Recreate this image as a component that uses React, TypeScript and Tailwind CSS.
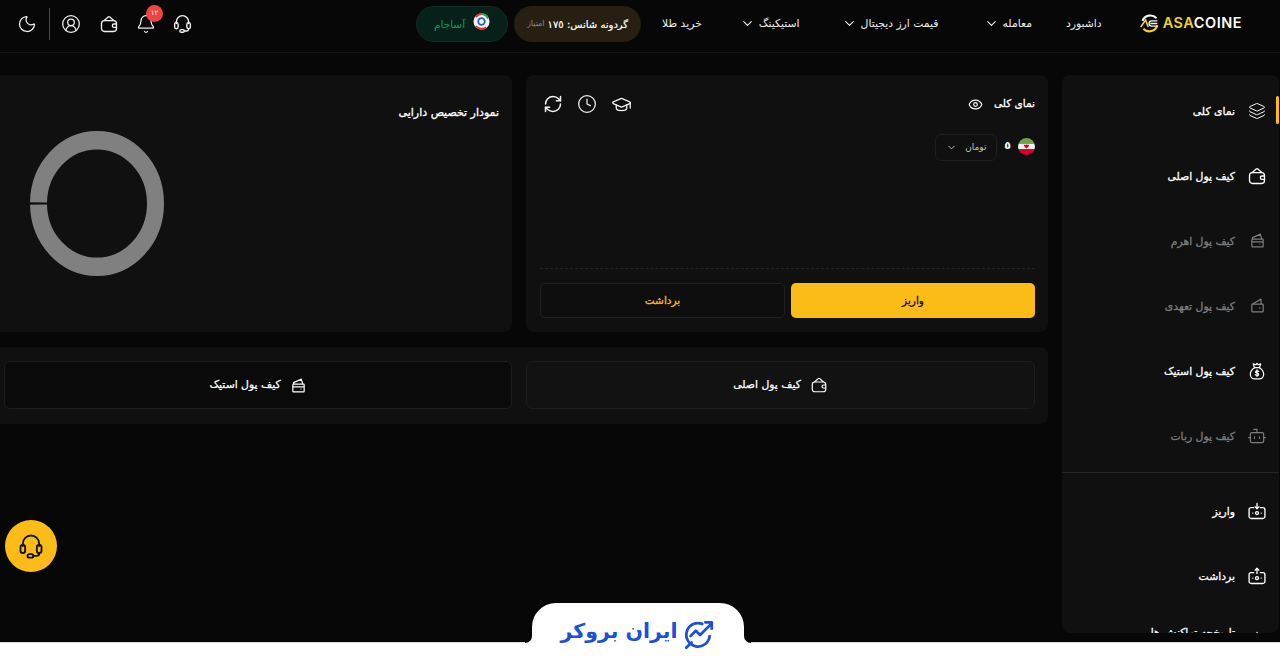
import { Bell, Bot, ChevronDown, CircleUserRound, Clock, Eye, GraduationCap, Layers, Moon, RefreshCw } from 'lucide-react'
import type { ReactNode } from 'react'

type IconProps = { className?: string }

function HeadsetIcon({ className = 'size-5' }: IconProps) {
  return (
    <svg viewBox="0 0 24 24" fill="none" stroke="currentColor" strokeWidth="1.6" strokeLinecap="round" strokeLinejoin="round" className={className}>
      <path d="M5 12v-2a7 7 0 0 1 14 0v2" />
      <rect x="3" y="11" width="4" height="7" rx="2" />
      <rect x="17" y="11" width="4" height="7" rx="2" />
      <path d="M19 18v.5a2 2 0 0 1-2 2h-3" />
      <rect x="9" y="19" width="5" height="3" rx="1.5" />
    </svg>
  )
}

function WalletIcon({ className = 'size-5' }: IconProps) {
  return (
    <svg viewBox="0 0 24 24" fill="none" stroke="currentColor" strokeWidth="1.6" strokeLinejoin="round" className={className}>
      <path d="M6 8 11 3.5c.6-.5 1.400-.5 2 0L18 8" />
      <rect x="3" y="8" width="18" height="13" rx="3.5" />
      <path d="M21 12h-3a2 2 0 0 0 0 4h3" />
    </svg>
  )
}

function LeverageIcon({ className = 'size-5' }: IconProps) {
  return (
    <svg viewBox="0 0 24 24" fill="none" stroke="currentColor" strokeWidth="1.7" strokeLinejoin="round" className={className}>
      <path d="M5 10V8l11-5 2 7" />
      <rect x="4" y="10" width="16" height="11" rx="1" />
      <path d="M4 14h16M15 17h1" />
    </svg>
  )
}

function CommitIcon({ className = 'size-5' }: IconProps) {
  return (
    <svg viewBox="0 0 24 24" fill="none" stroke="currentColor" strokeWidth="1.7" strokeLinejoin="round" className={className}>
      <path d="M5 10 17 3v7" />
      <rect x="4" y="10" width="16" height="11" rx="1" />
      <path d="M14 15.500h2" />
    </svg>
  )
}

function MoneyBagIcon({ className = 'size-5' }: IconProps) {
  return (
    <svg viewBox="0 0 24 24" fill="none" stroke="currentColor" strokeWidth="1.5" strokeLinejoin="round" strokeLinecap="round" className={className}>
      <path d="M9 8 7.500 3.500l3 1L12 3l1.500 1.500 3-1L15 8" />
      <path d="M9 8h6c3 2 5 5 5 8 0 3.500-2.500 5.500-5 5.500H9c-2.500 0-5-2-5-5.500 0-3 2-6 5-8Z" />
      <path d="M14 12.500c-.5-.7-3.500-1-3.800.6-.3 2 3.800 1.100 3.800 3.100 0 1.500-3.300 1.500-4 .3M12 10.500v8" />
    </svg>
  )
}

function TransferIcon({ up, className = 'size-5' }: IconProps & { up?: boolean }) {
  return (
    <svg viewBox="0 0 24 24" fill="none" stroke="currentColor" strokeWidth="1.6" strokeLinecap="round" strokeLinejoin="round" className={className}>
      <path d="M8 8H5a2.500 2.500 0 0 0-2.500 2.500v8A2.500 2.500 0 0 0 5 21h14a2.500 2.500 0 0 0 2.500-2.500v-8A2.500 2.500 0 0 0 19 8h-3" />
      <circle cx="12" cy="14.500" r="1.800" />
      <path d="M7 14.500h.1M17 14.500h.1M12 3v6" />
      {up ? <path d="m9.800 5 2.200-2.200L14.200 5" /> : <path d="m9.800 7 2.200 2.200L14.200 7" />}
    </svg>
  )
}

function IranFlag() {
  return (
    <svg viewBox="0 0 18 18" className="size-[17px] shrink-0">
      <clipPath id="flag">
        <circle cx="9" cy="9" r="9" />
      </clipPath>
      <g clipPath="url(#flag)">
        <rect width="18" height="6" fill="#6da544" />
        <rect y="6" width="18" height="6" fill="#f0f0f0" />
        <rect y="12" width="18" height="6" fill="#d80027" />
      </g>
      <path d="M6 7c.5 2.500 2 3.500 3 4 1-.5 2.500-1.500 3-4-1 .6-2 .6-3 0-1 .6-2 .6-3 0Z" fill="#d80027" />
    </svg>
  )
}

function Logo() {
  return (
    <div dir="ltr" className="flex items-center gap-[3px]">
      <svg viewBox="0 0 24 24" className="size-[21px]" fill="none" strokeWidth="2.400">
        <path d="M4 9a9.500 9.500 0 0 1 16-3" stroke="#f5f5f5" />
        <path d="M21 14a9.500 9.500 0 0 1-16 4" stroke="#f2d21a" />
        <path d="M2 16 7.500 8l3 8" stroke="#f2d21a" strokeWidth="1.800" />
        <path d="M21 9h-6.500a3 3 0 0 0 0 6H21M13 12h8" stroke="#f5f5f5" strokeWidth="1.600" />
      </svg>
      <span className="font-['Inter',sans-serif] text-[14.5px] font-semibold leading-none tracking-[0.5px] text-white">
        <span className="text-[#f2d21a]">ASA</span>COINE
      </span>
    </div>
  )
}

function NavItem({ label, menu, className = '' }: { label: string; menu?: boolean; className?: string }) {
  return (
    <div className={`flex items-center gap-[4px] whitespace-nowrap text-[10.8px] text-[#eeeeee] ${className}`}>
      <span className="pt-[2px]">{label}</span>
      {menu && <ChevronDown className="size-[15px]" strokeWidth={1.8} />}
    </div>
  )
}

function SideItem({ icon, label, muted, active, className = '' }: { icon: ReactNode; label: string; muted?: boolean; active?: boolean; className?: string }) {
  return (
    <div className={`relative flex h-[65px] shrink-0 items-center gap-[12px] pr-[12px] text-[10.8px] [-webkit-text-stroke:0.3px_currentColor] ${muted ? 'text-[#7d7d7d]' : 'text-white'} ${className}`}>
      <span className="flex w-[20px] justify-center">{icon}</span>
      <span className="whitespace-nowrap pt-[3px]">{label}</span>
      {active && <span className="absolute right-0 top-[18px] h-[28px] w-[3px] rounded-full bg-[#fcbc18]" />}
    </div>
  )
}

function Sidebar() {
  return (
    <aside className="h-[558px] w-[217px] shrink-0 overflow-hidden rounded-lg bg-[#101010] pt-[3px]">
      <SideItem active icon={<Layers className="size-[18px]" strokeWidth={1.3} />} label="نمای کلی" />
      <SideItem icon={<WalletIcon className="size-[20px]" />} label="کیف پول اصلی" />
      <SideItem muted icon={<LeverageIcon className="size-[17px]" />} label="کیف پول اهرم" />
      <SideItem muted icon={<CommitIcon className="size-[17px]" />} label="کیف پول تعهدی" />
      <SideItem icon={<MoneyBagIcon className="size-[20px]" />} label="کیف پول استیک" />
      <SideItem muted icon={<Bot className="size-[20px]" strokeWidth={1.4} />} label="کیف پول ربات" />
      <div className="mb-[5px] mt-[4px] border-t border-[#252525]" />
      <SideItem icon={<TransferIcon className="size-[20px]" />} label="واریز" />
      <SideItem icon={<TransferIcon up className="size-[20px]" />} label="برداشت" />
      <SideItem className="-mt-[9px]" icon={<TransferIcon className="mt-[16px] size-[20px]" />} label="تاریخچه تراکنش ها" />
    </aside>
  )
}

function OverviewCard() {
  return (
    <section className="flex h-[257px] flex-col rounded-lg bg-[#101010] pb-[14px] pl-[14px] pr-[13px] pt-[16px]">
      <div className="flex h-[26px] items-center justify-between">
        <div className="flex items-center gap-[11px]">
          <span className="text-[10.5px] text-white [-webkit-text-stroke:0.3px_currentColor]">نمای کلی</span>
          <Eye className="size-[15px] text-white" strokeWidth={1.8} />
        </div>
        <div className="ml-[3px] flex items-center gap-[14px] text-[#f2f2f2]">
          <GraduationCap className="size-[21px]" strokeWidth={1.5} />
          <Clock className="size-[20px]" strokeWidth={1.5} />
          <RefreshCw className="size-[20px]" strokeWidth={1.8} />
        </div>
      </div>
      <div className="mt-[15px] flex items-center gap-[6px]">
        <IranFlag />
        <span className="mx-[1px] text-[11px] font-bold text-white">٥</span>
        <div className="mt-[2px] flex h-[27px] w-[62px] items-center justify-center gap-[8px] rounded-md border border-[#1e1e1e] text-[9px] text-[#c4c4c4]">
          <span>تومان</span>
          <ChevronDown className="size-[11px]" />
        </div>
      </div>
      <div className="mt-auto border-t border-dashed border-[#262626]" />
      <div className="mt-[14px] flex gap-[6px]">
        <button className="h-[35px] w-[244px] shrink-0 rounded-[5px] bg-[#fcbc18] text-[10.5px] text-[#111111] [-webkit-text-stroke:0.3px_currentColor]">واریز</button>
        <button className="h-[35px] flex-1 rounded-[5px] border border-[#212121] bg-[#0e0e0e] text-[10.5px] text-[#fcbc18] [-webkit-text-stroke:0.3px_currentColor]">برداشت</button>
      </div>
    </section>
  )
}

function ChartCard() {
  return (
    <section className="flex h-[257px] flex-col rounded-lg bg-[#101010] pr-[13px] pt-[29px]">
      <h2 className="text-[11px] leading-[18px] text-white [-webkit-text-stroke:0.3px_currentColor]">نمودار تخصیص دارایی</h2>
      <svg viewBox="0 0 134 134" preserveAspectRatio="none" className="ml-[40px] mt-[9px] h-[145px] w-[134px] self-end" fill="none">
        <circle cx="67" cy="67" r="58.5" stroke="#808080" strokeWidth="17" pathLength="100" strokeDasharray="99.4 0.6" strokeDashoffset="-0.3" transform="rotate(180 67 67)" />
      </svg>
    </section>
  )
}

function WalletTabs() {
  return (
    <section className="col-span-2 grid h-[77px] grid-cols-[509px_1fr] gap-[14px] rounded-lg bg-[#101010] pb-[15px] pl-[14px] pr-[13px] pt-[14px]">
      <div className="flex items-center justify-center gap-[9px] rounded-md border border-[#1d1d1d] bg-[#121212] text-[10.8px] text-white [-webkit-text-stroke:0.25px_currentColor]">
        <WalletIcon className="size-[18px]" />
        <span className="pt-[1px]">کیف پول اصلی</span>
      </div>
      <div className="flex items-center justify-center gap-[9px] rounded-md border border-[#1d1d1d] bg-[#0a0a0a] text-[10.8px] text-white [-webkit-text-stroke:0.25px_currentColor]">
        <LeverageIcon className="size-[17px]" />
        <span className="pt-[1px]">کیف پول استیک</span>
      </div>
    </section>
  )
}

function Header() {
  return (
    <header className="flex h-[53px] shrink-0 items-center justify-between border-b border-[#161616] pb-[5px] pl-[17px] pr-[38px]">
      <div className="flex items-center">
        <Logo />
        <div className="mr-[37px] flex items-center gap-[34px]">
          <NavItem label="داشبورد" />
          <NavItem label="معامله" menu className="ml-[11px]" />
          <NavItem label="قیمت ارز دیجیتال" menu className="ml-[8px]" />
          <NavItem label="استیکینگ" menu className="ml-[4px]" />
          <NavItem label="خرید طلا" />
        </div>
        <div className="mr-[21px] flex h-[36px] w-[127px] items-center justify-center gap-[3px] rounded-full bg-[#272012] text-[10px] text-white">
          <span className="whitespace-nowrap pt-[1px] [-webkit-text-stroke:0.2px_currentColor]">گردونه شانس: ۱۷٥</span>
          <span className="pt-[1px] text-[8px] text-[#8a8a8a]">امتیاز</span>
        </div>
        <div className="mr-[6px] flex h-[36px] w-[92px] items-center justify-center gap-[8px] rounded-full border border-[#0e2f26] bg-[#06201a] text-[10.5px] text-[#0f9d58]">
          <svg viewBox="0 0 18 18" className="mb-[5px] size-[17px]" fill="none">
            <circle cx="9" cy="9" r="8.5" fill="#f4f4f4" />
            <path d="M3 4.500A8 8 0 0 1 9 1" stroke="#d83b32" strokeWidth="2" />
            <path d="M9 1a8 8 0 0 1 7 5" stroke="#2a9d58" strokeWidth="2" />
            <path d="M3 14a8 8 0 0 0 11 1" stroke="#d83b32" strokeWidth="2" />
            <circle cx="9" cy="9" r="3.500" stroke="#2563b8" strokeWidth="1.8" />
          </svg>
          <span className="pt-[2px]">آساجام</span>
        </div>
      </div>
      <div className="flex items-center text-[#f2f2f2]">
        <HeadsetIcon className="ml-[16px] size-[21px]" />
        <div className="relative ml-[17px]">
          <Bell className="size-[20px]" strokeWidth={1.5} />
          <span className="absolute -right-[7px] -top-[9px] flex size-[17px] items-center justify-center rounded-full bg-[#ef4444] text-[7px] text-white">۱۲</span>
        </div>
        <WalletIcon className="ml-[18px] size-[20px]" />
        <CircleUserRound className="ml-[11px] size-[20px]" strokeWidth={1.5} />
        <div className="ml-[12px] h-[32px] w-px bg-[#4a4a4a]" />
        <Moon className="size-[20px]" strokeWidth={1.5} />
      </div>
    </header>
  )
}

function TabFlare({ side }: { side: 'left' | 'right' }) {
  return (
    <span className={`absolute bottom-0 size-[7px] bg-white ${side === 'left' ? 'right-full' : 'left-full'}`}>
      <span className={`block size-full bg-[#070707] ${side === 'left' ? 'rounded-br-[7px]' : 'rounded-bl-[7px]'}`} />
    </span>
  )
}

function BrandTab() {
  return (
    <div className="absolute inset-x-0 bottom-0 h-[24px] border-t border-[#dddddd] bg-white">
      <div className="absolute bottom-[23px] left-[532px] flex h-[40px] w-[212px] items-start justify-center gap-[4px] rounded-t-[24px] bg-white pt-[14px] text-[#1d4fd8]">
        <TabFlare side="left" />
        <TabFlare side="right" />
        <svg viewBox="0 0 32 32" className="size-[34px] shrink-0" fill="none" stroke="currentColor" strokeWidth="2.6" strokeLinecap="round" strokeLinejoin="round">
          <path d="M26 18A11 11 0 1 1 19 6.500" />
          <path d="m8 18 5-5 4 4 11-11M22 5h6v6M9 24l-5 5" />
        </svg>
        <span className="whitespace-nowrap text-[20.5px] font-bold leading-[28px]">ایران بروکر</span>
      </div>
    </div>
  )
}

export default function App() {
  return (
    <div dir="rtl" className="relative flex h-[666px] w-[1280px] flex-col overflow-hidden bg-[#070707] font-['DejaVu_Sans',sans-serif]">
      <Header />
      <main className="flex gap-[14px] pr-px pt-[22px]">
        <Sidebar />
        <div className="grid w-[1058px] shrink-0 grid-cols-2 content-start gap-x-[14px] gap-y-[15px]">
          <OverviewCard />
          <ChartCard />
          <WalletTabs />
        </div>
      </main>
      <button className="absolute bottom-[94px] left-[5px] flex size-[52px] items-center justify-center rounded-full bg-[#fcbc18] text-[#111111]">
        <HeadsetIcon className="size-[28px]" />
      </button>
      <BrandTab />
    </div>
  )
}
